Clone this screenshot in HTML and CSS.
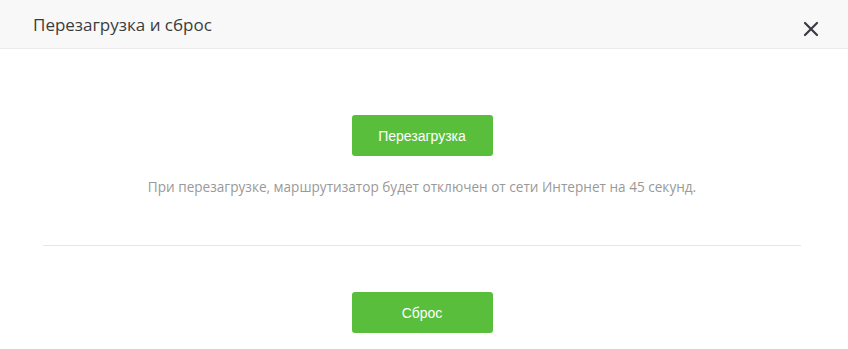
FILE: index.html
```html
<!DOCTYPE html>
<html lang="ru">
<head>
  <meta charset="UTF-8">
  <title>Перезагрузка и сброс</title>
  <link rel="stylesheet" href="styles.css">
</head>
<body>
  <div class="dialog">
    <div class="dialog-header">
      <span class="dialog-title">Перезагрузка и сброс</span>
      <button class="close-btn" aria-label="Закрыть">
        <svg width="16" height="16" viewBox="0 0 16 16">
          <path d="M2 2 L14 14 M14 2 L2 14" stroke="#3a3a44" stroke-width="2.2" stroke-linecap="round"/>
        </svg>
      </button>
    </div>

    <div class="dialog-body">
      <div class="section">
        <button class="btn-green">Перезагрузка</button>
        <p class="hint">При перезагрузке, маршрутизатор будет отключен от сети Интернет на 45 секунд.</p>
      </div>
      <hr class="divider">
      <div class="section section-reset">
        <button class="btn-green">Сброс</button>
      </div>
    </div>
  </div>
</body>
</html>
```

FILE: styles.css
```css
body {
  margin: 0;
  font-family: "Open Sans", sans-serif;
  background-color: #fff;
}
.dialog {
  width: 848px;
  height: 349px;
  overflow: hidden;
}
.dialog-header {
  height: 48px;
  background-color: #f8f8f8;
  border-bottom: 1px solid #ebebeb;
  display: flex;
  align-items: center;
  justify-content: space-between;
  padding: 0 29px 0 33px;
}
.dialog-title {
  font-size: 17px;
  color: #3c3c3c;
}
.close-btn {
  background: none;
  border: none;
  padding: 0;
  margin-top: 10px;
  cursor: pointer;
  display: flex;
}
.dialog-body {
  padding: 66px 47px 0 43px;
}
.section {
  display: flex;
  flex-direction: column;
  align-items: center;
}
.btn-green {
  width: 141px;
  height: 41px;
  background-color: #59be3b;
  color: #fff;
  border: none;
  border-radius: 3px;
  font-family: "Liberation Sans", Arial, sans-serif;
  font-size: 14px;
  cursor: pointer;
}
.hint {
  margin: 22px 0 0;
  font-size: 13.6px;
  line-height: 18px;
  color: #999;
}
.divider {
  margin: 49px 0 0;
  border: none;
  border-top: 1px solid #e6e6e6;
}
.section-reset {
  margin-top: 46px;
}
```
